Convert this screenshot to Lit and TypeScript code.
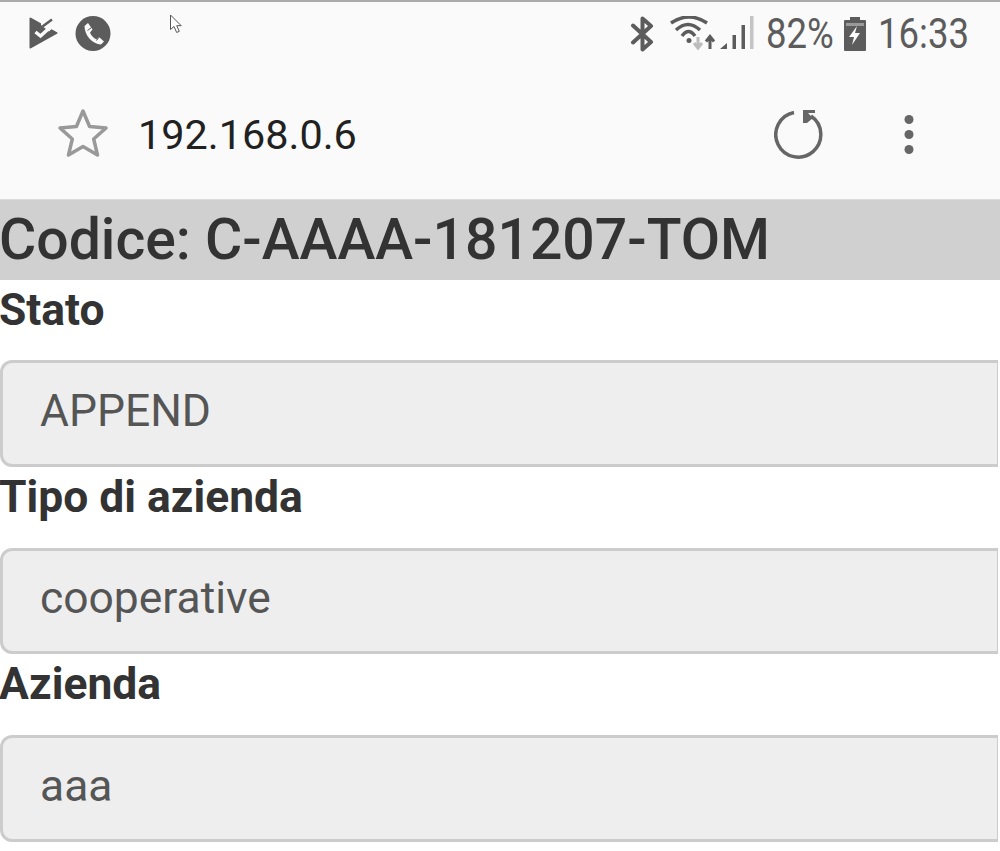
import { LitElement, html, css } from "lit";
import { customElement } from "lit/decorators.js";

const fields = [
  { label: "Stato", value: "APPEND" },
  { label: "Tipo di azienda", value: "cooperative" },
  { label: "Azienda", value: "aaa" },
];

@customElement("app-root")
export class AppRoot extends LitElement {
  static styles = css`
    :host {
      display: block;
      width: 1000px;
      height: 851px;
      overflow: hidden;
      background: #fff;
      font-family: Roboto, "Liberation Sans", sans-serif;
    }
    .chrome {
      height: 199px;
      background: #fafafa;
      border-top: 2px solid #ababab;
      box-sizing: border-box;
    }
    .status {
      height: 64px;
      box-sizing: border-box;
      display: flex;
      align-items: center;
      padding: 0 32px 0 29px;
      color: #5c5c5c;
    }
    .status svg { display: block; flex: none; }
    .left { display: flex; align-items: center; gap: 10px; }
    .cursor { margin-left: 48px; margin-top: -20px; }
    .spacer { flex: 1; }
    .right { display: flex; align-items: center; }
    .st-text {
      font-size: 42px;
      line-height: 44px;
      transform: scaleX(0.87);
      transform-origin: left center;
      white-space: nowrap;
    }
    .pct { width: 66px; margin-left: -1px; margin-right: 11px; }
    .time { width: 90px; }
    .bt { margin-right: 14px; }
    .wifi { margin-right: 13px; }
    .batt { margin-right: 11px; }
    .urlbar {
      display: flex;
      align-items: center;
      height: 133px;
      box-sizing: border-box;
      padding: 0 0 0 57px;
    }
    .url {
      margin: 4px 0 0 29px;
      font-size: 41.4px;
      line-height: 48px;
      color: #212121;
      flex: 1;
    }
    .reload { margin: 2px 79px 0 0; }
    .menu { margin: 4px 85px 0 0; }
    .title {
      margin: 0;
      height: 81px;
      background: #d0d0d0;
      color: #333;
      font-size: 57.1px;
      font-weight: 500;
      line-height: 79px;
      text-indent: -1px;
      white-space: nowrap;
      border-top: 1px solid #dcdcdc;
      box-sizing: border-box;
    }
    .field { display: flex; flex-direction: column; }
    .label {
      height: 80px;
      font-size: 44.4px;
      font-weight: 700;
      line-height: 60px;
      text-indent: -1px;
      color: #333;
      white-space: nowrap;
    }
    .field + .field .label { height: 81px; line-height: 61px; }
    .input {
      width: 998px;
      height: 106.5px;
      box-sizing: border-box;
      background: #eee;
      border: 3px solid #ccc;
      border-right-width: 1px;
      border-radius: 12px 0 0 12px;
      padding: 0 0 5px 37px;
      display: flex;
      align-items: center;
      font-size: 44.4px;
      color: #555;
    }
  `;

  render() {
    return html`
      <div class="chrome">
        <div class="status">
          <div class="left">
            <svg width="36" height="36" viewBox="0 0 36 36">
              <path d="M1.5 2.5 27.5 17 1.5 31.5Z" fill="#5c5c5c" stroke="#5c5c5c" stroke-width="2" stroke-linejoin="round"/>
              <path d="M12 9 20 15.5 30 6 24 0 12 7Z" fill="#fafafa"/>
              <path d="M6.5 16 11.5 20 27 6" fill="none" stroke="#fafafa" stroke-width="3.5"/>
              <path d="M13.5 10.5 23 3.5" fill="none" stroke="#5c5c5c" stroke-width="2.5"/>
            </svg>
            <svg width="36" height="36" viewBox="0 0 36 36">
              <circle cx="18" cy="17.5" r="17.5" fill="#5c5c5c"/>
              <path d="M9.5 10 13 7 17.5 13.5 15 16.5C16 19.5 18.5 22 21.5 23.5L24 21 29 25.5 26 28.5C17.5 28 9.5 19.5 9.5 10Z" fill="#fafafa"/>
              <path d="M12.5 14.5 16.5 11.5M21.5 24.5 25 20" fill="none" stroke="#5c5c5c" stroke-width="1"/>
            </svg>
            <svg class="cursor" width="14" height="20" viewBox="0 0 14 20">
              <path d="M1.5 1V15.5L5 12.5 7.7 18.5 10.3 17.3 7.7 11.7H12.2Z" fill="#fff" stroke="#555" stroke-width="1"/>
            </svg>
          </div>
          <div class="spacer"></div>
          <div class="right">
            <svg class="bt" width="26" height="36" viewBox="0 0 26 36">
              <path d="M3 9.5 21 26 12.5 33.5V2.5L21 10 3 26.5" fill="none" stroke="#5c5c5c" stroke-width="4" stroke-linejoin="round" stroke-linecap="round"/>
            </svg>
            <svg class="wifi" width="84" height="36" viewBox="0 0 84 36">
              <path d="M1 7Q19 -5 37 7" fill="none" stroke="#5c5c5c" stroke-width="3.5"/>
              <path d="M6 14Q18 3 30 14" fill="none" stroke="#5c5c5c" stroke-width="3.5"/>
              <path d="M12 20Q18.5 11 25 20" fill="none" stroke="#5c5c5c" stroke-width="3.5"/>
              <circle cx="19" cy="24.5" r="2.5" fill="#5c5c5c"/>
              <path d="M28 21V31M24 27 28 32 32 27" fill="none" stroke="#bcbcbc" stroke-width="3"/>
              <path d="M40 33V22M36 25.5 40 20.5 44 25.5" fill="none" stroke="#5c5c5c" stroke-width="3"/>
              <path d="M50 33 57 27V33Z" fill="#5c5c5c"/>
              <rect x="62.5" y="19" width="3.5" height="14" fill="#5c5c5c"/>
              <rect x="71.5" y="9" width="3.5" height="24" fill="#5c5c5c"/>
              <rect x="80" y="0" width="3.5" height="33" fill="#c4c4c4"/>
            </svg>
            <span class="st-text pct">82%</span>
            <svg class="batt" width="24" height="36" viewBox="0 0 24 36">
              <path d="M7 1H17V4H22A1 1 0 0 1 23 5V34A1 1 0 0 1 22 35H2A1 1 0 0 1 1 34V5A1 1 0 0 1 2 4H7Z" fill="#5c5c5c"/>
              <rect x="3" y="7" width="18" height="3" fill="#9a9a9a"/>
              <path d="M14 10 6 21H11L9 29 17 17H12Z" fill="#fafafa"/>
            </svg>
            <span class="st-text time">16:33</span>
          </div>
        </div>
        <div class="urlbar">
          <svg width="52" height="50" viewBox="0 0 52 50">
            <path d="M26 3 32.6 18.5 49 20 36.7 31 40.5 47 26 38.6 11.5 47 15.3 31 3 20 19.4 18.5Z" fill="none" stroke="#999" stroke-width="3.5" stroke-linejoin="round"/>
          </svg>
          <div class="url">192.168.0.6</div>
          <svg class="reload" width="50" height="50" viewBox="0 0 50 50">
            <path d="M20 3.5A22.5 22.5 0 1 0 37 7" fill="none" stroke="#666" stroke-width="3.5"/>
            <path d="M29 1H41V4H34L39 9 33 14H29Z" fill="#666"/>
          </svg>
          <svg class="menu" width="12" height="44" viewBox="0 0 12 44">
            <circle cx="6" cy="6.5" r="4.5" fill="#666"/>
            <circle cx="6" cy="21.5" r="4.5" fill="#666"/>
            <circle cx="6" cy="36.5" r="4.5" fill="#666"/>
          </svg>
        </div>
      </div>
      <h1 class="title">Codice: C-AAAA-181207-TOM</h1>
      ${fields.map(
        (f) => html`
          <div class="field">
            <div class="label">${f.label}</div>
            <div class="input">${f.value}</div>
          </div>
        `
      )}
    `;
  }
}
